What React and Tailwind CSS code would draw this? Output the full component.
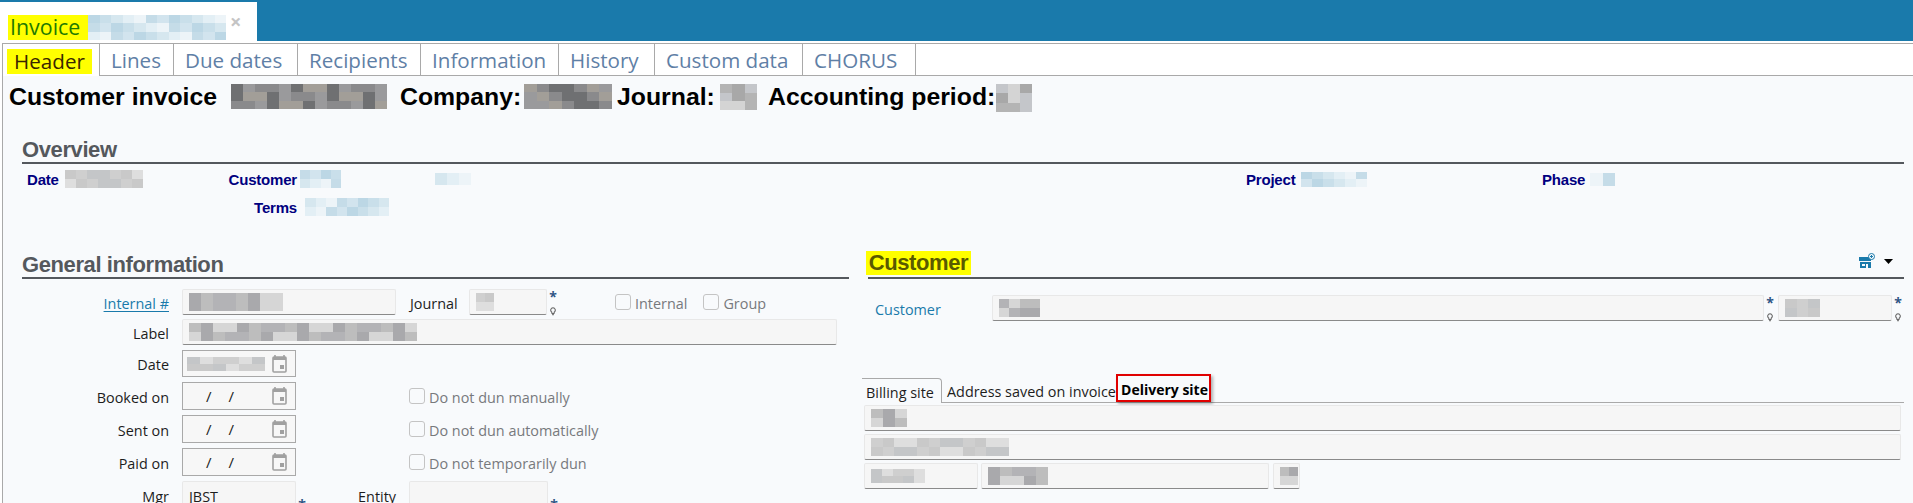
const tabs = [
  { label: "Lines", w: "w-[74px]" },
  { label: "Due dates", w: "w-[124px]" },
  { label: "Recipients", w: "w-[123px]" },
  { label: "Information", w: "w-[138px]" },
  { label: "History", w: "w-[96px]" },
  { label: "Custom data", w: "w-[148px]" },
  { label: "CHORUS", w: "w-[113px]" },
];

// Pixelated patches that hide customer data in the screenshot
function Blur({ cols, colors, className = "" }) {
  return (
    <div
      className={`grid shrink-0 ${className}`}
      style={{ gridTemplateColumns: `repeat(${cols}, 1fr)` }}
    >
      {colors.map((c, i) => (
        <div key={i} style={{ backgroundColor: c }} />
      ))}
    </div>
  );
}

const blueA = ["#e3eff5", "#d6e7ef", "#c9dfea", "#bcd7e5", "#d2e4ee", "#c5dce8", "#edf4f8"];
const grayA = ["#d6d6d6", "#c9c9c9", "#bdbdbd", "#dedede", "#b3b3b6", "#cfcfcf", "#a9a9ac", "#c4c6c8"];
const darkA = ["#a8a8a8", "#9a9a9c", "#c4c6ca", "#8a8a8c", "#b4b4b4", "#6f7072", "#d4d4d4", "#a29e98"];

function pick(list, n, seed = 1) {
  return Array.from({ length: n }, (_, i) => list[(i * i * 7 + i * 13 + seed * 5) % list.length]);
}

function Calendar() {
  return (
    <svg width="15" height="20" viewBox="0 0 15 20" className="shrink-0 text-[#a0a0a0]">
      <path d="M3 1v3M12 1v3" stroke="currentColor" strokeWidth="1.6" />
      <rect x="1" y="3" width="13" height="15" rx="1" fill="none" stroke="currentColor" strokeWidth="1.6" />
      <rect x="1" y="3" width="13" height="3" fill="currentColor" />
      <rect x="8" y="11" width="4" height="4" fill="currentColor" />
    </svg>
  );
}

function Marks({ className = "" }) {
  return (
    <div className={`flex h-[26px] w-[12px] shrink-0 flex-col items-center justify-between ${className}`}>
      <span className="h-[13px] text-[14px] leading-[15px] font-bold text-[#2f5585]">*</span>
      <svg width="6" height="9" viewBox="0 0 6 9" className="mb-[-1px]">
        <path d="M3 .8a2.3 2.3 0 0 1 1.4 4.1L4 6.5H2l-.4-1.6A2.3 2.3 0 0 1 3 .8zM2.2 7.6h1.6" fill="none" stroke="#666" strokeWidth="1.1" />
      </svg>
    </div>
  );
}

function Field({ className = "", h = "h-[26px]", children }) {
  return (
    <div className={`flex ${h} shrink-0 items-center rounded-[2px] border border-[#e8e8e8] border-b-[#8a8a8a] bg-[#f6f6f6] pl-[6px] ${className}`}>
      {children}
    </div>
  );
}

function DateField({ children, h = "h-[28px]" }) {
  return (
    <div className={`flex ${h} w-[114px] shrink-0 items-center justify-between border border-[#a9a9a9] bg-[#f7f7f7] pr-[8px] pl-[4px]`}>
      {children}
      <Calendar />
    </div>
  );
}

function EmptyDate() {
  return (
    <div className="flex w-[47px] justify-between pl-[19px] text-[15px] text-[#222]">
      <span>/</span>
      <span>/</span>
    </div>
  );
}

function Label({ children, className = "text-[#1d1d1d]" }) {
  return <div className={`w-[147px] shrink-0 pt-[4px] text-right ${className}`}>{children}</div>;
}

function Check({ label, className = "" }) {
  return (
    <div className={`flex shrink-0 items-center gap-[4px] text-[#77797c] ${className}`}>
      <span className="h-[16px] w-[16px] rounded-[3px] border border-[#c4c4c4] bg-[#f8fafc]" />
      <span className="pt-[4px]">{label}</span>
    </div>
  );
}

function SectionTitle({ children, className = "" }) {
  return (
    <div className={`flex h-[28px] items-end border-b-[2px] border-[#54585d] pb-[1px] text-[22px] leading-none font-bold tracking-[-0.4px] text-[#54585d] ${className}`} style={{ fontFamily: "'Liberation Sans', sans-serif" }}>
      {children}
    </div>
  );
}

export default function App() {
  return (
    <div className="h-[503px] w-full overflow-hidden bg-white text-[14.4px] leading-none" style={{ fontFamily: "'Open Sans', sans-serif" }}>
      {/* top strip with the open document */}
      <div className="h-[41px] bg-[#1a7aab] pt-[2px]">
        <div className="flex h-[39px] w-[257px] items-start bg-white pt-[13px] pl-[8px]">
          <span className="flex h-[25px] w-[80px] items-center bg-[#ffff00] pb-[1px] pl-[2px] text-[21.4px] text-[#1f7a00]">Invoice</span>
          <Blur cols={12} colors={pick(blueA, 36, 2)} className="h-[25px] w-[138px]" />
          <span className="ml-[4px] text-[20px] leading-[14px] font-bold text-[#c4c4c4]">×</span>
        </div>
      </div>

      <div className="mt-[2px] ml-[2px] h-[460px] border-t border-l border-[#a9a9a9] bg-[#f8fafc]">
        {/* page tabs */}
        <div className="flex h-[32px] border-b border-[#a9a9a9] bg-white text-[20.6px] text-[#5f80a6]">
          <div className="mb-[-1px] flex h-[32px] w-[97px] items-end border-r border-[#a9a9a9] bg-white pb-[2px] pl-[4px]">
            <span className="flex h-[25px] w-[85px] items-center justify-center bg-[#ffff00] text-[#3a2600]">Header</span>
          </div>
          {tabs.map((t) => (
            <div key={t.label} className={`flex items-center border-r border-[#a9a9a9] pt-[2px] pl-[11px] ${t.w}`}>
              {t.label}
            </div>
          ))}
        </div>

        {/* title */}
        <div className="flex h-[60px] items-start pt-[8px] pl-[6px] text-[24.8px] font-bold text-black" style={{ fontFamily: "'Liberation Sans', sans-serif" }}>
          <span className="flex h-[25px] w-[209px] items-center pt-[2px] whitespace-nowrap">Customer invoice</span>
          <Blur cols={13} colors={pick(darkA, 39, 1)} className="ml-[13px] h-[25px] w-[156px]" />
          <span className="ml-[13px] flex h-[25px] w-[118px] items-center pt-[2px] whitespace-nowrap">Company:</span>
          <Blur cols={7} colors={pick(darkA, 21, 3)} className="ml-[6px] h-[25px] w-[88px]" />
          <span className="ml-[5px] flex h-[25px] w-[96px] items-center pt-[2px] whitespace-nowrap">Journal:</span>
          <Blur cols={3} colors={pick(darkA, 9, 4)} className="ml-[7px] h-[26px] w-[37px]" />
          <span className="ml-[11px] flex h-[25px] w-[224px] items-center pt-[2px] whitespace-nowrap">Accounting period:</span>
          <Blur cols={3} colors={pick(darkA, 9, 2)} className="ml-[4px] h-[28px] w-[36px]" />
        </div>

        {/* overview */}
        <div className="ml-[19px] w-[1882px]">
          <SectionTitle>Overview</SectionTitle>
          <div className="text-[15px] font-bold tracking-[-0.2px] text-[#000080]" style={{ fontFamily: "'Liberation Sans', sans-serif" }}>
            <div className="mt-[6px] flex h-[18px] items-center">
              <span className="ml-[5px] w-[38px]">Date</span>
              <Blur cols={7} colors={pick(grayA, 14, 5)} className="h-[18px] w-[78px]" />
              <span className="w-[154px] text-right">Customer</span>
              <Blur cols={4} colors={pick(blueA, 8, 1)} className="ml-[3px] h-[18px] w-[41px]" />
              <Blur cols={3} colors={pick(blueA, 3, 3)} className="ml-[94px] h-[12px] w-[36px]" />
              <span className="ml-[775px] w-[52px]">Project</span>
              <Blur cols={6} colors={pick(blueA, 12, 2)} className="ml-[3px] h-[15px] w-[66px]" />
              <span className="ml-[175px] w-[42px]">Phase</span>
              <Blur cols={2} colors={pick(blueA, 2, 4)} className="ml-[6px] h-[13px] w-[25px]" />
            </div>
            <div className="mt-[10px] flex h-[18px] items-center">
              <span className="w-[275px] text-right">Terms</span>
              <Blur cols={8} colors={pick(blueA, 16, 3)} className="ml-[8px] h-[18px] w-[84px]" />
            </div>
          </div>
        </div>

        <div className="mt-[35px] ml-[19px] flex w-[1882px] items-start">
          {/* general information */}
          <div className="w-[827px] shrink-0">
            <SectionTitle>General information</SectionTitle>
            <div className="mt-[10px] flex items-center">
              <Label className="text-[#1a7aab] underline underline-offset-2">Internal #</Label>
              <Field className="ml-[13px] w-[214px]">
                <Blur cols={8} colors={pick(grayA, 16, 6)} className="h-[18px] w-[94px]" />
              </Field>
              <span className="ml-[14px] w-[59px] pt-[4px] text-[#1d1d1d]">Journal</span>
              <Field className="w-[78px]">
                <Blur cols={2} colors={pick(grayA, 4, 1)} className="h-[18px] w-[18px]" />
              </Field>
              <Marks />
              <Check label="Internal" className="ml-[56px]" />
              <Check label="Group" className="ml-[16px]" />
            </div>
            <div className="mt-[4px] flex items-center">
              <Label>Label</Label>
              <Field className="ml-[13px] w-[655px]">
                <Blur cols={19} colors={pick(grayA, 38, 2)} className="h-[18px] w-[228px]" />
              </Field>
            </div>
            <div className="mt-[5px] flex items-center">
              <Label>Date</Label>
              <div className="ml-[13px]">
                <DateField h="h-[27px]">
                  <Blur cols={6} colors={pick(grayA, 12, 3)} className="h-[14px] w-[78px]" />
                </DateField>
              </div>
            </div>
            {["Booked on", "Sent on", "Paid on"].map((name, i) => (
              <div key={name} className="mt-[5px] flex items-center">
                <Label>{name}</Label>
                <div className="ml-[13px]">
                  <DateField>
                    <EmptyDate />
                  </DateField>
                </div>
                <Check
                  label={["Do not dun manually", "Do not dun automatically", "Do not temporarily dun"][i]}
                  className="ml-[113px]"
                />
              </div>
            ))}
            <div className="mt-[5px] flex h-[28px] items-start">
              <div className="flex h-[28px] items-center">
                <Label>Mgr</Label>
              </div>
              <Field h="h-[28px]" className="ml-[13px] w-[114px] pt-[4px] text-[#1d1d1d]">JBST</Field>
              <Marks className="mt-[16px]" />
              <div className="ml-[39px] flex h-[28px] w-[49px] items-center justify-end pt-[4px] text-[#1d1d1d]">Entity</div>
              <Field h="h-[28px]" className="ml-[13px] w-[139px]" />
              <Marks className="mt-[16px]" />
            </div>
          </div>

          {/* customer */}
          <div className="ml-[19px] min-w-0 flex-1">
            <SectionTitle className="justify-between pr-[11px]">
              <span className="-ml-[2px] mb-[1px] flex h-[24px] w-[105px] items-center justify-center bg-[#ffff00] text-[#5a5a00]">Customer</span>
              <span className="mb-[7px] flex items-end gap-[9px]">
                <svg width="16" height="16" viewBox="0 0 16 16">
                  <path d="M0 4h12v4H0zM1 9h11v6H9v-4H7v4H1zM3 11h3v2H3z" fill="#1a7aab" fillRule="evenodd" />
                  <circle cx="12.500" cy="3.500" r="3" fill="#f8fafc" stroke="#1a7aab" />
                  <path d="M12.500 2v3M11 3.500h3" stroke="#1a7aab" />
                </svg>
                <svg width="9" height="5" viewBox="0 0 9 5" className="mb-[5px]">
                  <path d="M0 0h9L4.500 5z" fill="#000" />
                </svg>
              </span>
            </SectionTitle>
            <div className="mt-[16px] flex items-center">
              <span className="ml-[7px] w-[117px] pt-[4px] text-[#1a7aab]">Customer</span>
              <Field className="w-[772px] pl-[4px]">
                <Blur cols={4} colors={pick(grayA, 8, 4)} className="h-[18px] w-[41px]" />
              </Field>
              <Marks />
              <Field className="ml-[2px] w-[114px]">
                <Blur cols={3} colors={pick(grayA, 6, 5)} className="h-[18px] w-[35px]" />
              </Field>
              <Marks />
            </div>

            <div className="mt-[54px] -ml-[6px] flex h-[28px] items-end border-b border-[#a9a9a9] text-[#1d1d1d]">
              <div className="mb-[-1px] flex h-[25px] w-[80px] items-center rounded-tr-[4px] border-t border-r border-[#a9a9a9] bg-[#f8fafc] pt-[4px] pl-[4px]">Billing site</div>
              <div className="flex h-[24px] w-[174px] items-center pt-[4px] pl-[5px] whitespace-nowrap">Address saved on invoice</div>
              <div className="flex h-[28px] w-[95px] items-center justify-center border-[2px] border-[#e00000] pt-[4px] pl-[2px] text-[14px] font-bold whitespace-nowrap text-black shadow-[2px_2px_3px_rgba(0,0,0,0.3)]">Delivery site</div>
            </div>
            <div className="-ml-[4px] flex w-[1037px] flex-col gap-[3px] pt-[2px]">
              <Field className="w-full">
                <Blur cols={3} colors={pick(grayA, 6, 2)} className="h-[18px] w-[36px]" />
              </Field>
              <Field className="w-full pl-[4px]">
                <Blur cols={12} colors={pick(grayA, 24, 1)} className="h-[18px] w-[138px]" />
              </Field>
              <div className="flex gap-[3px]">
                <Field className="w-[114px] pl-[4px]">
                  <Blur cols={5} colors={pick(grayA, 10, 3)} className="h-[14px] w-[54px]" />
                </Field>
                <Field className="w-[288px]">
                  <Blur cols={5} colors={pick(grayA, 10, 6)} className="h-[18px] w-[60px]" />
                </Field>
                <Field className="ml-[1px] w-[27px] pl-[2px]">
                  <Blur cols={2} colors={pick(grayA, 4, 2)} className="h-[18px] w-[18px]" />
                </Field>
              </div>
            </div>
          </div>
        </div>
      </div>
    </div>
  );
}
